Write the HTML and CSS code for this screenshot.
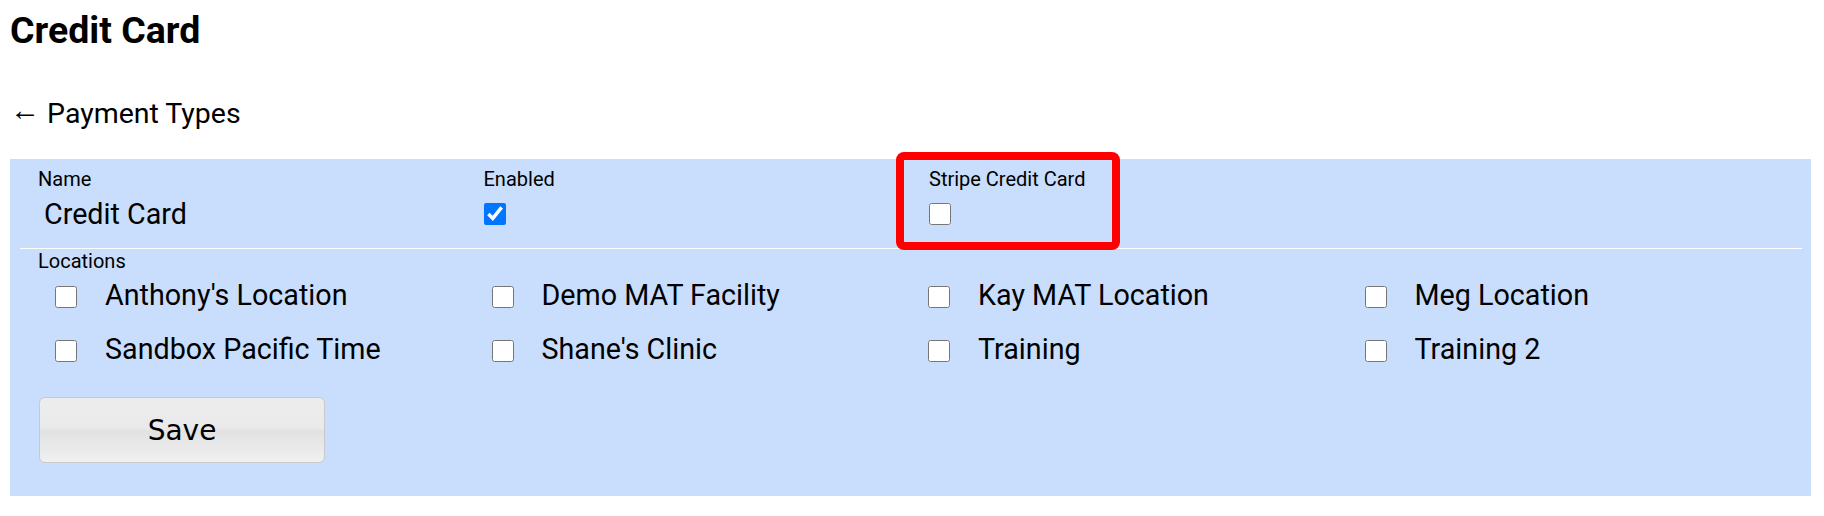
FILE: index.html
```html
<!DOCTYPE html>
<html lang="en">
<head>
  <meta charset="UTF-8">
  <title>Credit Card</title>
  <link rel="stylesheet" href="styles.css">
</head>
<body>
  <h1 class="title">Credit Card</h1>
  <div class="back">
    <a href="payment_types.html"><span class="arrow">&larr;</span> Payment Types</a>
  </div>
  <form class="panel" action="payment_types.html" method="post">
    <div class="fields">
      <div class="field">
        <div class="label">Name</div>
        <div class="value">Credit Card</div>
      </div>
      <div class="field">
        <div class="label">Enabled</div>
        <input type="checkbox" name="enabled" checked>
      </div>
      <div class="field highlighted">
        <div class="label">Stripe Credit Card</div>
        <input type="checkbox" name="stripe">
        <div class="highlight"></div>
      </div>
    </div>
    <div class="locations">
      <div class="label">Locations</div>
      <div class="location-grid">
        <label><input type="checkbox" name="location[]" value="1"> Anthony's Location</label>
        <label><input type="checkbox" name="location[]" value="2"> Demo MAT Facility</label>
        <label><input type="checkbox" name="location[]" value="3"> Kay MAT Location</label>
        <label><input type="checkbox" name="location[]" value="4"> Meg Location</label>
        <label><input type="checkbox" name="location[]" value="5"> Sandbox Pacific Time</label>
        <label><input type="checkbox" name="location[]" value="6"> Shane's Clinic</label>
        <label><input type="checkbox" name="location[]" value="7"> Training</label>
        <label><input type="checkbox" name="location[]" value="8"> Training 2</label>
      </div>
    </div>
    <button type="submit">Save</button>
  </form>
</body>
</html>
```

FILE: styles.css
```css
body {
  font-family: Roboto, Arial, sans-serif;
  color: #000;
  background: #fff;
  margin: 8px 13px 0 10px;
}
.title {
  font-size: 37.5px;
  line-height: 44px;
  font-weight: bold;
  margin: 0;
}
.back {
  margin-top: 43px;
  height: 33px;
  font-size: 28.5px;
  line-height: 33px;
}
.back a {
  color: #000;
  text-decoration: none;
}
.arrow {
  font-size: 30px;
  line-height: 1;
  vertical-align: 3px;
}
.panel {
  margin-top: 31px;
  background: #c9defc;
  padding: 8px 9px 33px 10px;
}
.fields {
  display: grid;
  grid-template-columns: repeat(4, 1fr);
  padding-bottom: 17px;
  border-bottom: 1px solid #fff;
}
.field {
  padding-left: 18px;
}
.label {
  font-size: 20px;
  line-height: 24px;
}
.value {
  font-size: 28.7px;
  line-height: 33px;
  margin: 7px 0 0 6px;
}
.field input[type="checkbox"] {
  width: 22px;
  height: 22px;
  margin: 12px 0 0 0;
  display: block;
}
.highlighted {
  position: relative;
}
.highlight {
  position: absolute;
  left: -15px;
  top: -15px;
  width: 224px;
  height: 98px;
  box-sizing: border-box;
  border: 8px solid #ff0000;
  border-radius: 8px;
}
.locations {
  margin: 0 18px;
}
.location-grid {
  display: grid;
  grid-template-columns: repeat(4, 1fr);
  row-gap: 21px;
  margin-top: 6px;
}
.location-grid label {
  display: flex;
  align-items: center;
  font-size: 28.7px;
  line-height: 33px;
}
.location-grid input[type="checkbox"] {
  width: 22px;
  height: 22px;
  margin: 2px 28px 0 17px;
}
button {
  margin: 31px 0 0 19px;
  width: 286px;
  height: 66px;
  font-family: "DejaVu Sans", Verdana, sans-serif;
  font-size: 28px;
  color: #000;
  border: 1px solid #c9c9c9;
  border-radius: 6px;
  background: linear-gradient(to bottom, #ededed 0%, #eaeaea 46%, #e2e2e2 52%, #f0f0f0 100%);
  cursor: pointer;
}
```
